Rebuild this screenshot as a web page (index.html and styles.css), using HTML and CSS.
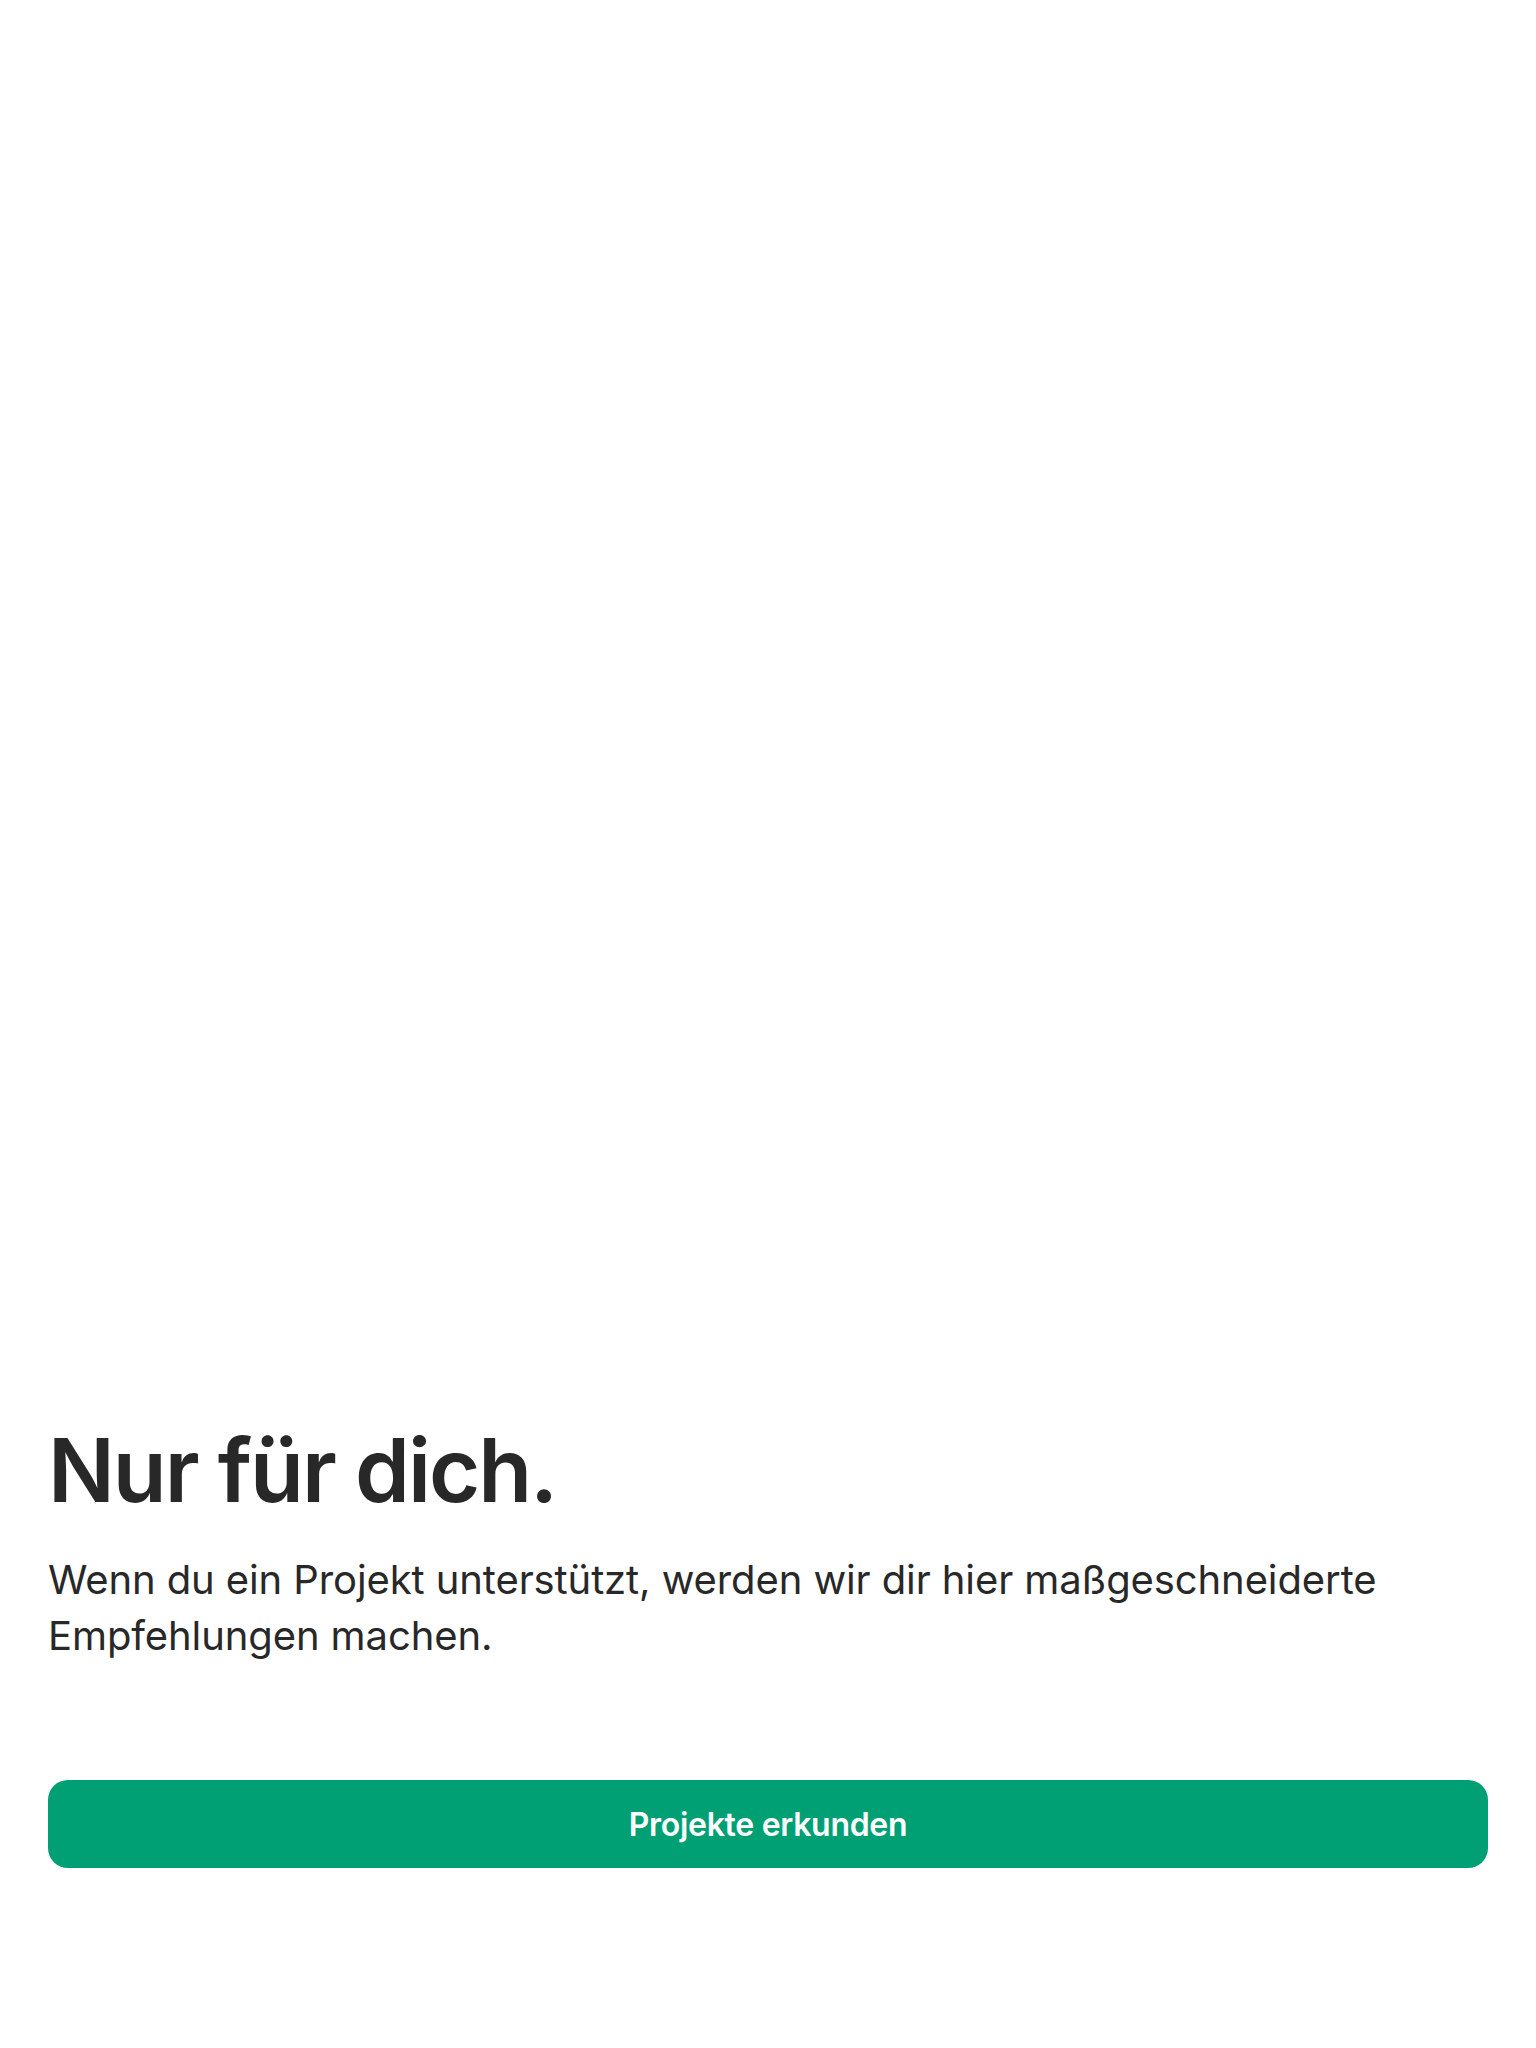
FILE: index.html
```html
<!DOCTYPE html>
<html lang="de">
<head>
<meta charset="utf-8">
<title>Nur für dich</title>
<link rel="stylesheet" href="styles.css">
</head>
<body>
<main class="screen">
  <section class="intro">
    <h1 class="title">Nur für dich.</h1>
    <p class="lead">Wenn du ein Projekt unterstützt, werden wir dir hier maßgeschneiderte Empfehlungen machen.</p>
  </section>
  <button class="cta" type="button">Projekte erkunden</button>
</main>
</body>
</html>
```

FILE: styles.css
```css
html, body {
  margin: 0;
  padding: 0;
  background: #ffffff;
}

.screen {
  box-sizing: border-box;
  height: 2048px;
  display: flex;
  flex-direction: column;
  justify-content: flex-end;
  padding: 0 48px 180px;
  font-family: Inter, "Noto Sans", "Liberation Sans", sans-serif;
  color: #282828;
}

.intro {
  display: flex;
  flex-direction: column;
}

.title {
  margin: 0;
  font-size: 88px;
  line-height: 108px;
  font-weight: 600;
  letter-spacing: -2px;
}

.lead {
  margin: 28px 0 0;
  font-size: 40px;
  line-height: 56px;
  font-weight: 400;
  letter-spacing: -0.1px;
  max-width: 1400px;
}

.cta {
  margin-top: 116px;
  height: 88px;
  width: 100%;
  border: 0;
  border-radius: 20px;
  background: #009f74;
  color: #ffffff;
  font-family: Inter, "Noto Sans", "Liberation Sans", sans-serif;
  font-size: 32px;
  font-weight: 600;
  letter-spacing: -0.3px;
}
```
